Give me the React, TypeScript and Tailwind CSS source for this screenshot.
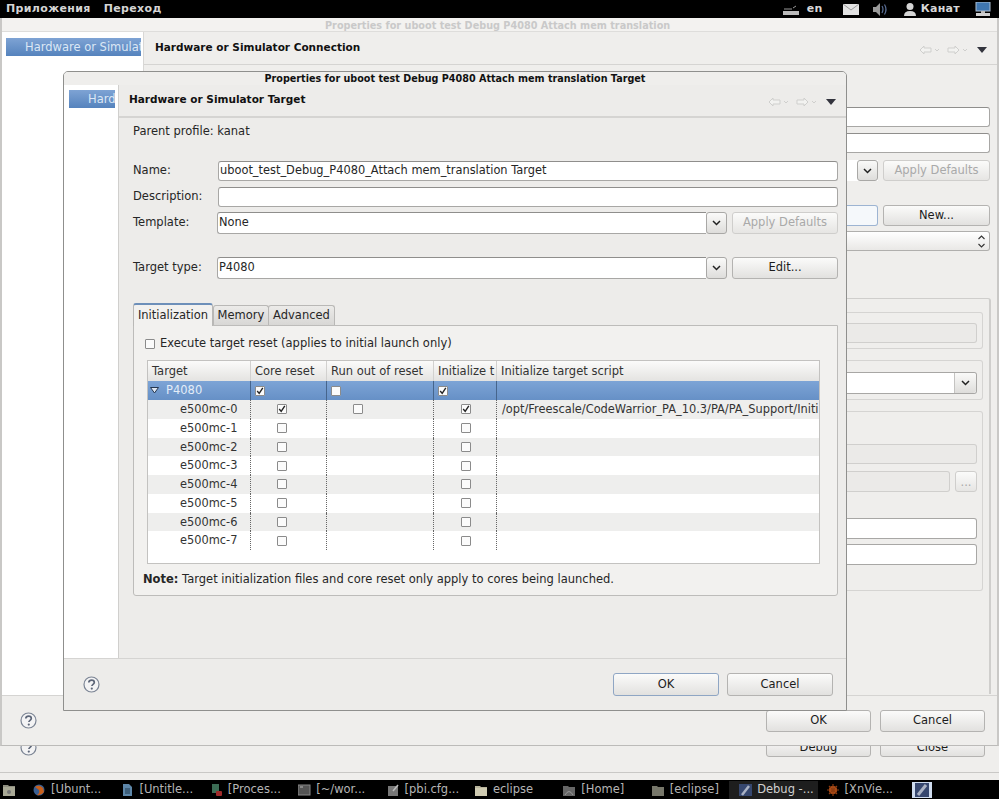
import React from "react";

const FONT = "font-['DejaVu_Sans',sans-serif]";

function Btn({ children, className = "", disabled = false, focus = false }: { children?: React.ReactNode; className?: string; disabled?: boolean; focus?: boolean }) {
  return (
    <div className={`flex items-center justify-center rounded-[3px] border bg-linear-to-b from-[#fbfbfa] to-[#e2e1df] text-[11.5px] ${focus ? "border-[#8fa6c4]" : "border-[#b4b3b1]"} ${disabled ? "text-[#a9a9a9] from-[#f0efed] to-[#e6e5e3] border-[#cfcecc]" : "text-[#1c1c1c]"} ${className}`}>
      {children}
    </div>
  );
}

function Field({ children, className = "" }: { children?: React.ReactNode; className?: string }) {
  return (
    <div className={`flex items-center rounded-[3px] border border-[#a8a7a5] border-t-[#8f8e8c] bg-white pl-[1px] text-[11.4px] text-[#262626] whitespace-nowrap ${className}`}>
      {children}
    </div>
  );
}

function Chevron({ className = "" }: { className?: string }) {
  return (
    <svg width="9" height="6" viewBox="0 0 9 6" className={className}>
      <path d="M1 1l3.5 3.5L8 1" fill="none" stroke="#222" strokeWidth="1.5" />
    </svg>
  );
}

function ComboBtn() {
  return (
    <div className="flex h-full w-[21px] shrink-0 items-center justify-center rounded-[3px] border border-[#a9a8a6] bg-linear-to-b from-[#fafaf9] to-[#dedddb]">
      <Chevron />
    </div>
  );
}

function Check({ on = false }: { on?: boolean }) {
  return (
    <span className="flex h-[10px] w-[10px] items-center justify-center rounded-[1px] border border-[#8b8b8b] bg-[#fbfbfb]">
      {on && (
        <svg width="8" height="8" viewBox="0 0 8 8">
          <path d="M1.2 4l2 2.4L6.8 .8" fill="none" stroke="#222" strokeWidth="1.4" />
        </svg>
      )}
    </span>
  );
}

function Help() {
  return (
    <svg width="17" height="17" viewBox="0 0 17 17">
      <circle cx="8.5" cy="8.5" r="7.5" fill="#f3f3f4" stroke="#7b8494" strokeWidth="1.2" />
      <path d="M5.8 6.6c0-1.6 1.2-2.5 2.8-2.5s2.7.9 2.7 2.3c0 1.9-2.4 1.9-2.4 3.6" fill="none" stroke="#5d6678" strokeWidth="1.7" />
      <circle cx="8.8" cy="12.6" r="1.1" fill="#5d6678" />
    </svg>
  );
}

function NavArrows() {
  const Ghost = ({ flip = false }: { flip?: boolean }) => (
    <svg width="21" height="10" viewBox="0 0 21 10">
      <g transform={flip ? "translate(13 0) scale(-1 1)" : undefined}>
        <path d="M1 5l4-4v2h7v4H5v2z" fill="#f2f2f0" stroke="#cfcfcd" />
      </g>
      <path d="M16 4l2 2 2-2" fill="none" stroke="#cfcfcd" />
    </svg>
  );
  return (
    <div className="mt-[3px] flex items-center gap-[7px]">
      <Ghost />
      <Ghost flip />
      <svg width="10" height="6" viewBox="0 0 10 6" className="ml-[2px]">
        <path d="M0 0h10L5 6z" fill="#33343d" />
      </svg>
    </div>
  );
}

function SideItem({ label, className = "" }: { label: string; className?: string }) {
  return (
    <div className={`h-[18px] overflow-hidden whitespace-nowrap bg-linear-to-b from-[#7ea3d4] to-[#5583bd] text-[11.5px] leading-[18px] text-[#dbe7f5] ${className}`}>
      {label}
    </div>
  );
}

const COLS = ["w-[103px]", "w-[76px]", "w-[107px]", "w-[63px]"];

function Row({ name, bg, checks }: { name: string; bg: string; checks: [boolean | null, boolean | null, boolean | null]; script?: string }) {
  return (
    <div className={`flex h-[18.75px] text-[11.4px] text-[#333] ${bg}`}>
      <div className={`${COLS[0]} shrink-0 border-r border-dotted border-[#666] pl-[32px] leading-[18px]`}>{name}</div>
      <div className={`${COLS[1]} flex shrink-0 items-center justify-center border-r border-dotted border-[#666] pr-[14px]`}>{checks[0] !== null && <Check on={checks[0]} />}</div>
      <div className={`${COLS[2]} flex shrink-0 items-center justify-center border-r border-dotted border-[#666] pr-[44px]`}>{checks[1] !== null && <Check on={checks[1]} />}</div>
      <div className={`${COLS[3]} flex shrink-0 items-center justify-center border-r border-dotted border-[#666] pl-[1px]`}>{checks[2] !== null && <Check on={checks[2]} />}</div>
      <div className="min-w-0 flex-1 overflow-hidden whitespace-nowrap pl-[5px] leading-[18px]">
        {name === "e500mc-0" ? "/opt/Freescale/CodeWarrior_PA_10.3/PA/PA_Support/Initi" : ""}
      </div>
    </div>
  );
}

function HeadCell({ children, className = "" }: { children?: React.ReactNode; className?: string }) {
  return (
    <div className={`overflow-hidden whitespace-nowrap border-r border-[#d2d1cf] pl-[4px] leading-[20px] ${className}`}>{children}</div>
  );
}

function Table() {
  return (
    <div className="ml-[2px] mt-[8px] h-[204px] w-[673px] border border-[#c3c2c0] bg-white">
      <div className="flex h-[20px] bg-linear-to-b from-[#fbfbfa] to-[#e4e3e1] text-[11.5px] text-[#333]">
        <HeadCell className={`${COLS[0]} shrink-0`}>Target</HeadCell>
        <HeadCell className={`${COLS[1]} shrink-0`}>Core reset</HeadCell>
        <HeadCell className={`${COLS[2]} shrink-0`}>Run out of reset</HeadCell>
        <HeadCell className={`${COLS[3]} shrink-0`}>Initialize t</HeadCell>
        <HeadCell className="flex-1 border-r-0">Initialize target script</HeadCell>
      </div>
      <div className="flex h-[19px] bg-linear-to-b from-[#7da4d6] to-[#6690c6] text-[11.5px] text-[#e3edf8]">
        <div className={`${COLS[0]} flex shrink-0 items-center border-r border-[#46658c] pl-[2px]`}>
          <svg width="9" height="7" viewBox="0 0 9 7"><path d="M.5 .5h8L4.5 6z" fill="#dfe8f3" stroke="#25364f" /></svg>
          <span className="ml-[7px]">P4080</span>
        </div>
        <div className={`${COLS[1]} flex shrink-0 items-center border-r border-[#46658c] pl-[4px]`}><Check on /></div>
        <div className={`${COLS[2]} flex shrink-0 items-center border-r border-[#46658c] pl-[4px]`}><Check /></div>
        <div className={`${COLS[3]} flex shrink-0 items-center border-r border-[#46658c] pl-[4px]`}><Check on /></div>
        <div className="flex-1" />
      </div>
      <Row name="e500mc-0" bg="bg-[#eeeeed]" checks={[true, false, true]} />
      <Row name="e500mc-1" bg="bg-white" checks={[false, null, false]} />
      <Row name="e500mc-2" bg="bg-[#eeeeed]" checks={[false, null, false]} />
      <Row name="e500mc-3" bg="bg-white" checks={[false, null, false]} />
      <Row name="e500mc-4" bg="bg-[#eeeeed]" checks={[false, null, false]} />
      <Row name="e500mc-5" bg="bg-white" checks={[false, null, false]} />
      <Row name="e500mc-6" bg="bg-[#eeeeed]" checks={[false, null, false]} />
      <Row name="e500mc-7" bg="bg-white" checks={[false, null, false]} />
    </div>
  );
}

function FormRow({ label, className = "", children }: { label: string; className?: string; children: React.ReactNode }) {
  return (
    <div className={`flex items-center ${className}`}>
      <div className="w-[85px] shrink-0 text-[11.5px] text-[#262626]">{label}</div>
      {children}
    </div>
  );
}

function Dialog() {
  return (
    <div className="absolute left-[63px] top-[71px] flex h-[640px] w-[784px] flex-col overflow-hidden rounded-t-[5px] border border-[#8f8f8d] bg-[#edecea]">
      <div className="h-[13px] shrink-0 bg-[#efeeec] text-center text-[9.65px] font-bold leading-[14px] text-[#111]">
        Properties for uboot test Debug P4080 Attach mem translation Target
      </div>
      <div className="flex min-h-0 flex-1">
        <div className="w-[55px] shrink-0 border-r border-[#d0cfcd] bg-white pl-[5px] pt-[5px] pr-[3px]">
          <SideItem label="Hard" className="pl-[19px]" />
        </div>
        <div className="flex min-w-0 flex-1 flex-col">
          <div className="flex h-[33px] shrink-0 items-center justify-between border-b-2 border-[#d5d4d2] pl-[10px] pr-[10px]">
            <span className="-mt-[1px] text-[10.5px] font-bold text-[#111]">Hardware or Simulator Target</span>
            <NavArrows />
          </div>
          <div className="pl-[14px] pr-[8px]">
            <div className="mt-[5px] h-[16px] text-[11.5px] leading-[16px] text-[#262626]">Parent profile: kanat</div>
            <FormRow label="Name:" className="mt-[22px]">
              <Field className="h-[20px] flex-1">uboot_test_Debug_P4080_Attach mem_translation Target</Field>
            </FormRow>
            <FormRow label="Description:" className="mt-[6px]">
              <Field className="h-[20px] flex-1" />
            </FormRow>
            <FormRow label="Template:" className="mt-[5px] h-[22px]">
              <div className="flex h-full flex-1">
                <Field className="-ml-px h-full flex-1 rounded-r-none border-r-0">None</Field>
                <ComboBtn />
                <Btn disabled className="ml-[5px] h-full w-[106px] shrink-0">Apply Defaults</Btn>
              </div>
            </FormRow>
            <FormRow label="Target type:" className="mt-[23px] h-[22px]">
              <div className="flex h-full flex-1">
                <Field className="-ml-px h-full flex-1 rounded-r-none border-r-0">P4080</Field>
                <ComboBtn />
                <Btn className="ml-[5px] h-full w-[106px] shrink-0">Edit...</Btn>
              </div>
            </FormRow>
            <div className="mt-[24px] flex h-[22px] items-end text-[11.5px] text-[#262626]">
              <div className="relative z-10 -mb-px flex h-[23px] w-[80px] items-center justify-center rounded-t-[3px] border border-b-0 border-[#b9b8b6] border-t-2 border-t-[#6d8fb9] bg-[#f2f1ef]">Initialization</div>
              <div className="flex h-[20px] w-[56px] items-center justify-center rounded-t-[3px] border border-b-0 border-[#b9b8b6] bg-linear-to-b from-[#ecebe9] to-[#d8d7d5]">Memory</div>
              <div className="-ml-px flex h-[20px] w-[67px] items-center justify-center rounded-t-[3px] border border-b-0 border-[#b9b8b6] bg-linear-to-b from-[#ecebe9] to-[#d8d7d5]">Advanced</div>
            </div>
            <div className="h-[271px] rounded-b-[3px] border border-[#bdbcba] bg-[#f2f1ef] pl-[11px]">
              <div className="mt-[10px] flex h-[16px] items-center text-[11.5px] text-[#262626]">
                <Check />
                <span className="ml-[5px]">Execute target reset (applies to initial launch only)</span>
              </div>
              <Table />
              <div className="ml-[-2px] mt-[7px] text-[11.5px] leading-[16px] text-[#262626]">
                <b>Note:</b> Target initialization files and core reset only apply to cores being launched.
              </div>
            </div>
          </div>
        </div>
      </div>
      <div className="flex h-[52px] shrink-0 items-center justify-between border-t border-[#d5d4d2] bg-[#edecea] pl-[19px] pr-[13px]">
        <Help />
        <div className="flex gap-[8px]">
          <Btn focus className="h-[23px] w-[106px]">OK</Btn>
          <Btn className="h-[23px] w-[106px]">Cancel</Btn>
        </div>
      </div>
    </div>
  );
}

function GroupBox({ className = "", children }: { className?: string; children: React.ReactNode }) {
  return <div className={`rounded-r-[3px] border border-l-0 border-[#d5d4d2] pr-[5px] ${className}`}>{children}</div>;
}

function RightStrip() {
  return (
    <div className="ml-auto flex w-[152px] flex-1 flex-col">
      <Field className="mt-[42px] mr-[7px] h-[20px] rounded-l-none border-l-0" />
      <Field className="mt-[6px] mr-[7px] h-[20px] rounded-l-none border-l-0" />
      <div className="mt-[7px] mr-[7px] flex h-[21px]">
        <div className="flex w-[33px] bg-white"><div className="flex-1" /><ComboBtn /></div>
        <Btn disabled className="ml-[5px] flex-1">Apply Defaults</Btn>
      </div>
      <div className="mt-[24px] mr-[7px] flex h-[21px]">
        <div className="w-[33px] rounded-r-[3px] border border-l-0 border-[#9db4d2] bg-[#f5f8fb]" />
        <Btn className="ml-[5px] flex-1">New...</Btn>
      </div>
      <div className="mt-[5px] mr-[7px] flex h-[20px] items-center justify-end rounded-r-[3px] border border-l-0 border-[#b0afad] bg-linear-to-b from-white to-[#e9e8e6] pr-[4px]">
        <svg width="7" height="13" viewBox="0 0 7 13"><path d="M.5 4l3-3 3 3M.5 9l3 3 3-3" fill="none" stroke="#333" strokeWidth="1.1" /></svg>
      </div>
      <div className="mt-[47px] mb-[1px] mr-[6px] flex flex-1 flex-col rounded-tr-[3px] border-r-2 border-t border-[#cfcecc] pr-[6px]">
        <GroupBox className="mt-[13px] h-[37px] pt-[10px]">
          <div className="h-[20px] rounded-r-[3px] border border-l-0 border-[#d0cfcd] bg-[#ebeae8]" />
        </GroupBox>
        <GroupBox className="mt-[11px] h-[40px] pt-[11px]">
          <div className="flex h-[22px] rounded-r-[3px] border border-l-0 border-[#a8a7a5] bg-white">
            <div className="flex-1" />
            <div className="flex w-[22px] items-center justify-center rounded-r-[3px] border-l border-[#c4c3c1] bg-linear-to-b from-[#fafaf9] to-[#dedddb]"><Chevron /></div>
          </div>
        </GroupBox>
        <GroupBox className="mt-[11px] h-[180px] pt-[32px]">
          <div className="h-[20px] rounded-r-[3px] border border-l-0 border-[#d0cfcd] bg-[#ebeae8]" />
          <div className="mt-[7px] flex h-[21px]">
            <div className="flex-1 rounded-r-[3px] border border-l-0 border-[#d0cfcd] bg-[#ebeae8]" />
            <Btn disabled className="ml-[5px] w-[22px] leading-[12px]">...</Btn>
          </div>
          <div className="mt-[26px] h-[21px] rounded-r-[3px] border border-l-0 border-[#a8a7a5] bg-white" />
          <div className="mt-[5px] h-[21px] rounded-r-[3px] border border-l-0 border-[#a8a7a5] bg-white" />
        </GroupBox>
      </div>
    </div>
  );
}

function BackWindow() {
  return (
    <div className="absolute left-0 top-[18px] flex h-[728px] w-[999px] flex-col border-b border-[#bcbbb9] border-l-2 border-l-[#c9c8c6] border-r-2 border-r-[#c9c8c6] bg-[#efeeec]">
      <div className="h-[14px] shrink-0 border-b border-[#dedddb] bg-[#f3f2f0] pl-[323px] text-[9.7px] font-bold leading-[15px] text-[#c9c9c9]">
        Properties for uboot test Debug P4080 Attach mem translation
      </div>
      <div className="flex min-h-0 flex-1">
        <div className="w-[142px] shrink-0 border-r border-[#d8d7d5] bg-white pl-[4px] pr-[2px] pt-[6px]">
          <SideItem label="Hardware or Simulat" className="pl-[19px]" />
        </div>
        <div className="flex min-w-0 flex-1 flex-col">
          <div className="flex h-[33px] shrink-0 items-center justify-between border-b border-[#d5d4d2] pl-[11px] pr-[10px]">
            <span className="-mt-[1px] text-[10.5px] font-bold text-[#111]">Hardware or Simulator Connection</span>
            <NavArrows />
          </div>
          <RightStrip />
        </div>
      </div>
      <div className="flex h-[50px] shrink-0 items-center justify-between border-t border-[#d5d4d2] pl-[18px] pr-[12px]">
        <Help />
        <div className="flex gap-[9px]">
          <Btn className="h-[22px] w-[105px]">OK</Btn>
          <Btn className="h-[22px] w-[105px]">Cancel</Btn>
        </div>
      </div>
    </div>
  );
}

function Tray() {
  return (
    <div className="flex items-center text-[#d8d8d8]">
      <svg width="16" height="10" viewBox="0 0 16 10" className="mr-[8px]">
        <path d="M0 6h16v4H0z" fill="#bbb" />
        <path d="M1 4h8M10 3l3-2" stroke="#999" fill="none" />
      </svg>
      <span className="mr-[20px] text-[11px] font-bold">en</span>
      <svg width="16" height="11" viewBox="0 0 16 11" className="mr-[14px]">
        <rect width="16" height="11" fill="#e2e2e2" />
        <path d="M0 0l8 6 8-6" fill="none" stroke="#999" />
      </svg>
      <svg width="17" height="13" viewBox="0 0 17 13" className="mr-[14px]">
        <path d="M0 4h3l4-4v13L3 9H0z" fill="#9a9a9a" />
        <path d="M9 3q2 3 0 7M11.5 1.500q3 5 0 10" fill="none" stroke="#5a6f96" strokeWidth="1.200" />
      </svg>
      <svg width="12" height="13" viewBox="0 0 12 13" className="mr-[5px]">
        <circle cx="6" cy="3.500" r="3.500" fill="#d5d5d5" />
        <path d="M0 13q0-5 6-5t6 5z" fill="#d5d5d5" />
      </svg>
      <span className="mr-[15px] text-[11px] font-bold tracking-[0.3px]">Канат</span>
      <svg width="16" height="15" viewBox="0 0 16 15" className="mr-[1px]">
        <rect x="1" y="0" width="14" height="9" fill="#3f76b0" stroke="#aebfd2" />
        <rect x="6" y="9" width="4" height="2" fill="#bbb" />
        <rect x="1" y="11" width="14" height="3" fill="#cfcfcf" />
      </svg>
    </div>
  );
}

function TaskIcon({ kind }: { kind: number }) {
  const icons: React.ReactNode[] = [
    <g key="f"><circle cx="6" cy="6" r="5.500" fill="#3a5f92" /><path d="M2 3q4-3 8 1l1 4q-3 4-7 3 3-2 2-5z" fill="#c8601c" /></g>,
    <g key="d"><path d="M2 0h6l3 3v9H2z" fill="#5d86a8" /><path d="M4 5h5M4 7h5M4 9h5" stroke="#20384c" /></g>,
    <g key="p"><rect x="2" y="0" width="7" height="9" fill="#3c6d55" /><rect x="6" y="7" width="6" height="5" rx="1" fill="#a02a2a" /></g>,
    <g key="t"><rect x="0" y="1" width="12" height="10" fill="#555" stroke="#888" /><path d="M2 3h3" stroke="#bbb" /></g>,
    <g key="e"><rect x="1" y="2" width="10" height="10" fill="#777" /><path d="M6 7l5-6" stroke="#bbb" strokeWidth="1.500" /></g>,
    <g key="o"><path d="M0 2h5l1 1h6v9H0z" fill="#b8b49c" /><rect y="4" width="12" height="8" fill="#cfcbb2" /></g>,
    <g key="h"><path d="M0 2h5l1 1h6v9H0z" fill="#666" /><path d="M2 11q4-7 8 0" fill="none" stroke="#999" /></g>,
    <g key="c"><path d="M0 2h5l1 1h6v9H0z" fill="#77776a" /></g>,
    <g key="a"><rect width="13" height="12" fill="#36476f" /><path d="M3 11l7-9" stroke="#aab2c4" strokeWidth="2.500" /></g>,
    <g key="x"><circle cx="6" cy="6" r="4" fill="#c2581c" /><path d="M6 0v12M0 6h12M2 2l8 8M10 2l-8 8" stroke="#8e3c10" strokeWidth="1.200" /></g>,
  ];
  return <svg width="13" height="12" viewBox="0 0 13 12" className="shrink-0">{icons[kind]}</svg>;
}

function Taskbar() {
  const items = ["[Ubunt...", "[Untitle...", "[Proces...", "[~/wor...", "[pbi.cfg...", "eclipse", "[Home]", "[eclipse]", "Debug -...", "[XnVie..."];
  return (
    <div className="flex h-[19px] shrink-0 items-center bg-black pt-[1px] text-[11.5px] text-[#b5b5b5]">
      <svg width="22" height="12" viewBox="0 0 22 12" className="shrink-0">
        <path d="M3 1h5l1 1h6v10H3z" fill="#8f8f80" />
        <rect x="3" y="3" width="12" height="9" fill="#a9a996" />
        <circle cx="9" cy="8" r="2" fill="#777" />
      </svg>
      {items.map((t, i) => (
        <div key={t} className={`flex h-full w-[88.4px] shrink-0 items-center gap-[5px] overflow-hidden whitespace-nowrap ${i === 8 ? "bg-[#1e1e1e] pl-[10px] text-[#d0d0d0]" : i === 9 ? "pl-[9px]" : "pl-[11px]"}`}>
          <TaskIcon kind={i} />
          <span>{t}</span>
        </div>
      ))}
      <div className="ml-[6px] flex h-[16px] w-[20px] items-center justify-center bg-[#cfdcef]">
        <svg width="14" height="14" viewBox="0 0 14 14"><rect width="14" height="14" fill="#36476f" /><path d="M3 12l8-10" stroke="#aab2c4" strokeWidth="3" /></svg>
      </div>
    </div>
  );
}

export default function App() {
  return (
    <div className={`${FONT} relative flex h-[799px] w-[999px] flex-col overflow-hidden bg-[#efeeec]`}>
      <div className="flex h-[18px] shrink-0 items-center justify-between bg-black pl-[6px] pr-[7px] pt-[1px] text-[11px] font-bold tracking-[0.35px] text-[#d5d5d5]">
        <div className="flex gap-[13px]">
          <span>Приложения</span>
          <span>Переход</span>
        </div>
        <Tray />
      </div>
      <div className="flex min-h-0 flex-1 flex-col justify-end">
        <div className="flex items-center justify-between pl-[20px] pr-[14px]">
          <Help />
          <div className="flex gap-[9px]">
            <Btn className="h-[20px] w-[105px] pt-[2px]">Debug</Btn>
            <Btn className="h-[20px] w-[105px] pt-[2px]">Close</Btn>
          </div>
        </div>
        <div className="mt-[15px] h-[8px] border-t border-[#c9c8c6]" />
      </div>
      <Taskbar />
      <BackWindow />
      <Dialog />
    </div>
  );
}
